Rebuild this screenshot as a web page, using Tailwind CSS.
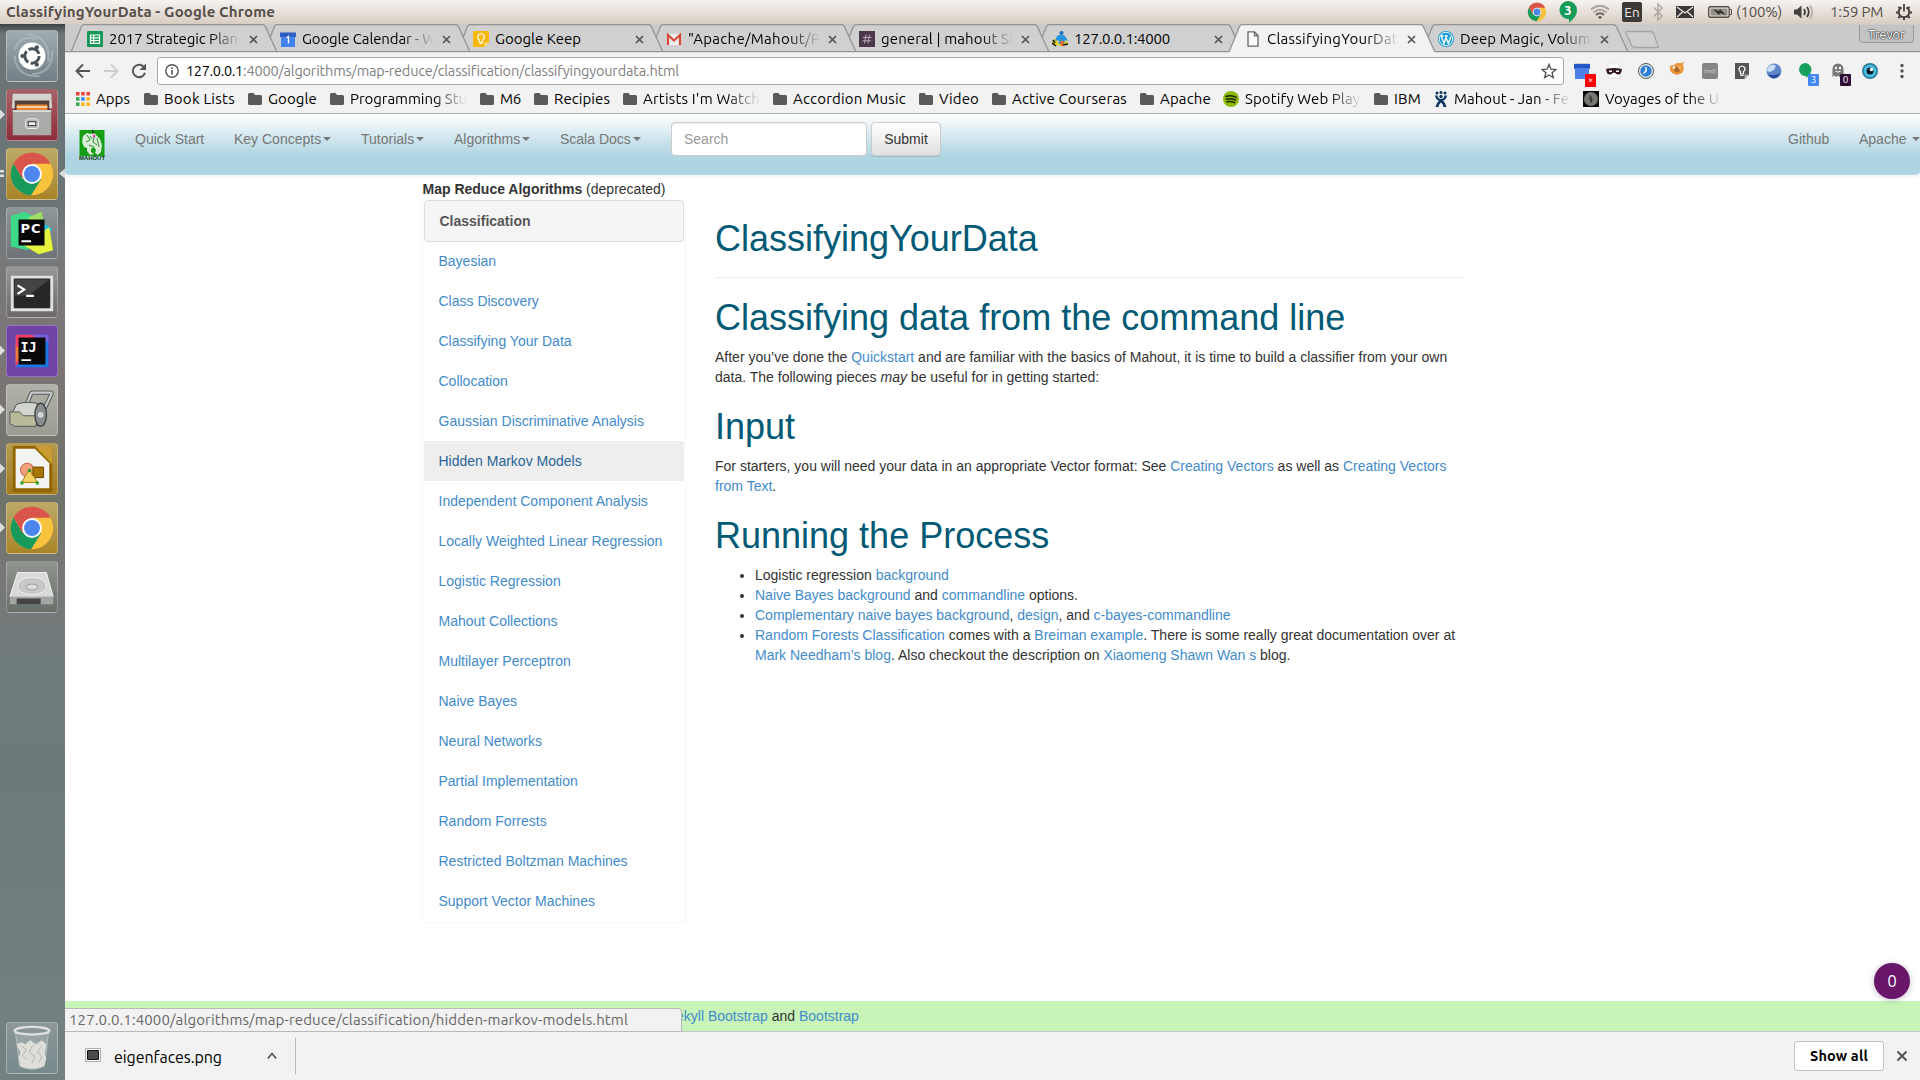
<!DOCTYPE html>
<html lang="en">
<head>
<meta charset="utf-8">
<title>ClassifyingYourData - Google Chrome</title>
<script src="https://cdn.jsdelivr.net/npm/@tailwindcss/browser@4"></script>
</head>
<body class="w-[1920px] h-[1080px] overflow-hidden flex flex-col bg-white font-[Ubuntu,'Open_Sans','Noto_Sans',sans-serif]">
<svg class="hidden">
  <defs>
    <symbol id="chrome" viewBox="0 0 48 48">
      <circle cx="24" cy="24" r="22" fill="#f9c23c"/>
      <path d="M24 24 4.9 13A22 22 0 0 1 43 13H24z" fill="#db5246"/>
      <path d="M4.9 13A22 22 0 0 0 23 46L33.5 29.5 24 24 14.5 29.5z" fill="#189a5c"/>
      <path d="M24 13h19A22 22 0 0 0 4.9 13l9.6 16.5z" fill="#d9554c"/>
      <circle cx="24" cy="24" r="10.3" fill="#fff"/><circle cx="24" cy="24" r="8.3" fill="#4c86ee"/>
    </symbol>
    <symbol id="folder" viewBox="0 0 14 12"><path d="M0 1.5Q0 0 1.5 0H5.5L7 2H12.5Q14 2 14 3.500V10.500Q14 12 12.500 12H1.500Q0 12 0 10.500z" fill="#5a5a5a"/></symbol>
    <symbol id="apps" viewBox="0 0 14 14"><path d="M0 0h3.500v3.500H0zM5.200 0h3.500v3.500H5.200zM10.400 0h3.500v3.500h-3.500z" fill="#ea4335"/><path d="M0 5.200h3.500v3.500H0z" fill="#34a853"/><path d="M5.200 5.200h3.500v3.500H5.200z" fill="#2a8bf2"/><path d="M10.400 5.200h3.500v3.500h-3.500zM5.200 10.400h3.500v3.500H5.200zM10.400 10.400h3.500v3.500h-3.500z" fill="#fbb50b"/><path d="M0 10.400h3.500v3.500H0z" fill="#34a853"/></symbol>
    <symbol id="spotify" viewBox="0 0 16 16"><circle cx="8" cy="8" r="8" fill="#8cba05"/><path d="M3 5.400Q8.500 3.800 13.300 6.400M3.500 8.200Q8.200 6.900 12.400 9M4 10.800Q8 9.800 11.500 11.600" stroke="#1b2400" stroke-width="1.600" fill="none" stroke-linecap="round"/></symbol>
    <symbol id="jira" viewBox="0 0 14 16"><g fill="#0b3562"><circle cx="3" cy="2" r="1.500"/><circle cx="7" cy="1.500" r="1.500"/><circle cx="11" cy="2" r="1.500"/><path d="M1 4.500h2.500Q4 8 7 8t3.500-3.500H13Q12.500 8.500 9 9.700 12 12 12.500 16H9.500Q9.500 13 7 11.500 4.500 13 4.500 16H1.500Q2 12 5 9.700 1.500 8.500 1 4.500z"/><circle cx="7" cy="5.500" r="1.700"/></g></symbol>
    <symbol id="voyages" viewBox="0 0 16 16"><path d="M0 0h16v16H0z" fill="#080808"/><circle cx="8" cy="8" r="7" fill="#757773"/><path d="M7 4.500Q10.500 8 7.500 12M6 6l2 4" stroke="#222" fill="none"/></symbol>
    <symbol id="sheets" viewBox="0 0 16 16"><rect width="16" height="16" rx="1" fill="#149a58"/><path d="M3.500 4h9v8.300h-9zM3.500 6.800h9M3.500 9.500h9M6.700 4v8" fill="none" stroke="#fff" stroke-width="1.200"/></symbol>
    <symbol id="calendar" viewBox="0 0 16 16"><path d="M1 0h14v3H1z" fill="#c3c7cf"/><path d="M0 1.500h16V6H0z" fill="#2f5ec4"/><path d="M1 6h14v10H1z" fill="#4383f1"/><path d="M6.500 6.800 8.500 5.500V12.500" stroke="#fff" stroke-width="1.300" fill="none"/></symbol>
    <symbol id="keep" viewBox="0 0 16 16"><path d="M1 0h14q1 0 1 1v10.500L11.500 16H1q-1 0-1-1V1q0-1 1-1z" fill="#f8b80b"/><path d="M16 11.500 11.500 16v-4.500z" fill="#fde08b"/><path d="M8 2.800a3.300 3.300 0 0 0-1.700 6.100V11h3.400V8.900A3.300 3.300 0 0 0 8 2.800zM6.500 12.500h3" fill="none" stroke="#fff" stroke-width="1.100"/></symbol>
    <symbol id="gmail" viewBox="0 0 16 16"><path d="M1 3h14v11H1z" fill="#eee"/><path d="M2 14V4l6 5.500L14 4v10" fill="none" stroke="#d6493b" stroke-width="2.200"/></symbol>
    <symbol id="slack" viewBox="0 0 16 16"><path d="M0 0h16v16H0z" fill="#4c374b"/><path d="M7 3.500 5.500 12.500M10.500 3.500 9 12.500M4 6.500h8.500M3.500 9.800H12" stroke="#b9a9b9" fill="none"/></symbol>
    <symbol id="mahoutfav" viewBox="0 0 16 16"><path d="M0 11Q2 7 5 8l1 5 9-3 1 4-6 1-4-1-4 1z" fill="#e7cf05"/><path d="M0 12l4 3M11 14l5-1M1 9l2 3" stroke="#111" stroke-width="1.500"/><circle cx="9.500" cy="2" r="2" fill="#1470bc"/><path d="M5 5Q9 2 13 5l3 5-3-1-1 4H7L6.500 9 3 10z" fill="#2594dc"/><path d="M8 10h4l-1 5H9z" fill="#f26d21"/></symbol>
    <symbol id="page" viewBox="0 0 16 16"><path d="M3 .8h6.500L13 4.500V15.200H3zM9.500 .8v4H13" fill="#fafafa" stroke="#666" stroke-width="1.300"/></symbol>
    <symbol id="wordpress" viewBox="0 0 16 16"><circle cx="8" cy="8" r="8" fill="#1b9ed0"/><circle cx="8" cy="8" r="6.700" fill="none" stroke="#fff" stroke-width=".9"/><path d="M3.200 5l2.800 7.500 2-6 2.300 6L13 5.500M2.500 5h3M6.800 5h3" stroke="#fff" stroke-width="1.300" fill="none"/></symbol>
  </defs>
</svg>

<!-- Desktop panel -->
<header class="h-6 shrink-0 flex items-center pl-1.5 pr-2 bg-linear-to-b from-[#f6f3f0] to-[#d8cdc3] text-[#574f4a] text-[15px]">
  <span data-w="269" class="font-bold text-[15px] whitespace-nowrap mr-auto">ClassifyingYourData - Google Chrome</span>
  <div class="flex items-center w-[385px] h-6">
    <svg class="w-5 h-5 mr-3" viewBox="0 0 48 48"><use href="#chrome"/></svg>
    <div class="relative w-[18px] h-6 mr-[13px]"><svg class="w-[18px] h-6" viewBox="0 0 18 24"><path d="M9 1a9 9 0 0 1 9 9c0 6-4 9-8 13v-4A9 9 0 1 1 9 1z" fill="#169c5b"/></svg><b class="absolute left-0 top-0 w-[18px] text-center text-white text-[13px] leading-5">3</b></div>
    <svg class="w-5 h-5 mr-3" viewBox="0 0 20 20" fill="none" stroke-width="1.800"><path d="M1 7.500Q10 0 19 7.500M3.500 10.500Q10 5 16.500 10.500" stroke="#aaa39c"/><path d="M6 13Q10 9.500 14 13" stroke="#655e58"/><path d="M8 15l2 2 2-2q-2-1.500-4 0z" fill="#3c3836" stroke="none"/></svg>
    <span class="w-5 h-5 rounded-xs bg-[#3c3a39] text-[#efebe7] text-[13.5px] leading-5 text-center mr-[10px]">En</span>
    <svg class="w-3 h-5 mr-3" viewBox="0 0 12 20" fill="none" stroke="#b0a8a0" stroke-width="1.500"><path d="M2 5.500 10 14 6 18V2l4 4-8 8.500"/></svg>
    <svg class="w-[18px] h-3 mr-[14px]" viewBox="0 0 18 12"><path d="M0 0h18v12H0z" fill="#3c3a39"/><path d="M1 1l8 6 8-6M1 11l5.500-5M17 11l-5.500-5" stroke="#e8e2dc" stroke-width="1.300" fill="none"/></svg>
    <svg class="w-6 h-3 mr-1" viewBox="0 0 24 12"><rect x=".7" y=".7" width="20.500" height="10.600" rx="1.500" fill="none" stroke="#55504c" stroke-width="1.400"/><path d="M2.500 2.500h17v7h-17z" fill="#96908b"/><path d="M22 3.500h1.500v5H22" fill="none" stroke="#55504c"/><path d="M5 3l6 2 1-2 6 6-6-2-1 2z" fill="#35312f"/></svg>
    <span class="w-[58px] flex"><span data-w="46" class="whitespace-nowrap text-[15px]">(100%)</span></span>
    <svg class="w-5 h-4 mr-4" viewBox="0 0 20 16"><path d="M0 5.500h3L7.500 1.500v13L3 10.500H0z" fill="#45403d"/><path d="M10 5q2 3 0 6M13 3q3.500 5 0 10" fill="none" stroke="#45403d" stroke-width="1.800"/><path d="M16 1.500q4.500 6.500 0 13" fill="none" stroke="#b5ada6" stroke-width="1.600"/></svg>
    <span data-w="53" class="whitespace-nowrap text-[15px]">1:59 PM</span>
    <svg class="w-4 h-4 ml-auto" viewBox="0 0 16 16" fill="none" stroke="#45403d"><path d="M5.500 3.300a5.300 5.300 0 1 0 5 0" stroke-width="2"/><path d="M8 0v7.500" stroke-width="1.800"/><path d="M0 8.500h2.500M13.500 8.500H16M2.300 14l2-2M13.700 14l-2-2M8 13.500V16M2.500 3l1.500 1.500M13.500 3 12 4.500" stroke-width="2"/></svg>
  </div>
</header>

<div class="flex flex-1 min-h-0">
<!-- Launcher -->
<aside class="relative w-[65px] shrink-0 overflow-hidden flex flex-col items-start pl-1.5 pt-1.5 pb-1.5 gap-[7px] bg-[linear-gradient(180deg,#3c4344_0,#6c7677_10px,#6b7577_180px,#77797a_220px,#7c7475_350px,#6d7468_470px,#787778_560px,#6f7a7a_630px,#6d7a7c_750px,#748081_1056px)]">
  <svg class="size-[52px] rounded-[4px] border border-white/30 bg-linear-to-b from-[#a0acb0] to-[#728087] shrink-0" viewBox="0 0 52 52"><path d="M8 20Q12 4 30 8M20 3Q46 6 43 32M47 20Q48 44 26 45M8 26Q9 48 34 47" stroke="#b7c1c4" stroke-width="2" fill="none" opacity=".6"/><circle cx="26" cy="26" r="14" fill="#fff"/><circle cx="26" cy="26" r="7.500" fill="none" stroke="#47525b" stroke-width="3" stroke-dasharray="13.200 2.500"/><g fill="#47525b"><circle cx="16" cy="26" r="2.200"/><circle cx="31" cy="17" r="2.200"/><circle cx="31" cy="35" r="2.200"/></g></svg>
  <svg class="size-[52px] rounded-[4px] border border-white/25 bg-linear-to-b from-[#a66269] to-[#8d2c3b] shrink-0" viewBox="0 0 52 52"><path d="M6 4h40l1 15H5z" fill="#d3d3d1"/><path d="M8 11h36v12H8z" fill="#554236"/><path d="M10 15h32v7H10z" fill="#e78535"/><path d="M10 17h32v1.500H10z" fill="#ffe9c6"/><path d="M6 21h40v26H6z" fill="#aaaaa8"/><path d="M6 21h40v2H6z" fill="#ddd"/><rect x="19.500" y="30" width="13" height="10" rx="2" fill="#b5b5b5" stroke="#eee"/><rect x="22" y="33" width="8" height="4" fill="#eee" stroke="#333"/></svg>
  <svg class="size-[52px] rounded-[4px] border border-white/25 bg-linear-to-b from-[#bda968] to-[#a88425] shrink-0" viewBox="0 0 52 52"><use href="#chrome" x="2" y="2" width="48" height="48"/></svg>
  <svg class="size-[52px] rounded-[4px] border border-white/25 bg-linear-to-b from-[#909799] to-[#6c7275] shrink-0" viewBox="0 0 52 52"><path d="M4 8 18 4l12 6-8 34-18-4z" fill="#3ed889"/><path d="M22 10 36 4l3 14-8 8z" fill="#9fdf63"/><path d="M36 14l11 8-8 10z" fill="#1fc2e8"/><path d="M16 38 44 20l4 24-15 4z" fill="#e4f33e"/><path d="M12 12h27v27H12z" fill="#080808"/><path d="M15 33.500h10v2H15z" fill="#fff"/><text x="14" y="25.500" font-family="DejaVu Sans" font-weight="bold" font-size="13.500" fill="#fff" textLength="21">PC</text></svg>
  <svg class="size-[52px] rounded-[4px] border border-white/25 bg-linear-to-b from-[#989796] to-[#6e6a6a] shrink-0" viewBox="0 0 52 52"><path d="M4 9h44v37H4z" fill="#dfe0df"/><path d="M7 12h38v31H7z" fill="#262727"/><path d="M8 13h36L22 30H8z" fill="#434444"/><path d="M11 19l7 4.500-7 4.500M20 30h8" stroke="#fff" stroke-width="2.200" fill="none"/></svg>
  <svg class="size-[52px] rounded-[4px] border border-white/25 bg-[#7044a5] shrink-0" viewBox="0 0 52 52"><path d="M9 9h34v34H9z" fill="#1978e8"/><path d="M9 9h22L9 43z" fill="#fb3d6a"/><path d="M9 20l8 8-8 10z" fill="#ea7b35"/><path d="M26 9h17v8L30 13z" fill="#7b5edc"/><path d="M12 12h28v28H12z" fill="#090909"/><path d="M15 34.500h10v2H15z" fill="#fff"/><text x="14" y="27" font-family="DejaVu Sans Mono" font-weight="bold" font-size="14" fill="#fff">IJ</text></svg>
  <svg class="size-[52px] rounded-[4px] border border-white/25 bg-linear-to-b from-[#b0b1a9] to-[#9b9d93] shrink-0" viewBox="0 0 52 52"><path d="M19 24 25 9Q25.500 8 27 8H45Q47 8 46 10L36 31" fill="none" stroke="#5b605e" stroke-width="4.500"/><path d="M19 24 25 9Q25.500 8 27 8H45Q47 8 46 10L36 31" fill="none" stroke="#c6cac8" stroke-width="2.300"/><path d="M10 20Q22 16 34 20L38 42H14L5 30z" fill="#d2d4ce" stroke="#4d514f"/><path d="M3 28h10l4 4h15l-2 11H8L3 40z" fill="#b9ba9a" stroke="#555"/><ellipse cx="35" cy="31" rx="6" ry="12" fill="#8a8f8f" stroke="#444" stroke-width="1.500"/><circle cx="35" cy="31" r="3" fill="#d6d8d8"/></svg>
  <svg class="size-[52px] rounded-[4px] border border-white/25 bg-linear-to-b from-[#b39b52] to-[#a37a18] shrink-0" viewBox="0 0 52 52"><path d="M6 2h41v46q0 2-2 2H8q-2 0-2-2z" fill="#916400"/><path d="M29 2h18v19z" fill="#c99c31"/><path d="M9 5h20l15 15v26H9z" fill="#f3f3f2"/><circle cx="21" cy="27" r="7" fill="#f2a17b" stroke="#b85c3c"/><path d="M27 24h11v11H27z" fill="#a87500" stroke="#694900"/><path d="M23 27l9 13H15z" fill="#f4d163" stroke="#a87b10"/><path d="M14 39h3v3h-3zM30 39h3v3h-3zM22 26h3v3h-3z" fill="#22a51d"/></svg>
  <svg class="size-[52px] rounded-[4px] border border-white/25 bg-linear-to-b from-[#bda968] to-[#a88425] shrink-0" viewBox="0 0 52 52"><use href="#chrome" x="2" y="2" width="48" height="48"/></svg>
  <svg class="size-[52px] rounded-[4px] border border-white/25 bg-linear-to-b from-[#91948f] to-[#686f69] shrink-0" viewBox="0 0 52 52"><path d="M11 11h30l7 25H3z" fill="#d8d9d8" stroke="#f1f1f1"/><path d="M3 36h45v8H3z" fill="#a4a6a5"/><path d="M10 38h25v6H10z" fill="#444"/><ellipse cx="26" cy="25" rx="15" ry="9" fill="#c7c9c8" stroke="#eee"/><ellipse cx="26" cy="26" rx="6" ry="3" fill="#ddd" stroke="#999"/></svg>
  <svg class="size-[52px] rounded-[4px] border border-white/30 bg-linear-to-b from-[#8c9799] to-[#78898b] shrink-0 mt-auto" viewBox="0 0 52 52"><path d="M9 10 13 45Q26 51 39 45L43 10z" fill="#98a4a5" stroke="#b8c1c1"/><path d="M10 22l5-2 4 2 5-4 6 4 6-4 5 4-2 10 2 5-3 8q-12 5-24 0l-2-9 2-5z" fill="#deded9"/><path d="M15 24l5 4-4 6 5 4M27 23l-4 7 6 5-3 7M36 24l-4 6 4 5-3 6" stroke="#b4b5b1" fill="none"/><ellipse cx="26" cy="8" rx="18" ry="4" fill="#889596" stroke="#dde0df" stroke-width="2.500"/></svg>
  <!-- running-window pips over the launcher's edges -->
  <svg class="absolute left-0 top-0 w-[65px] h-[620px]" viewBox="0 0 65 620"><g fill="#dcdedd"><path d="M0 85.500l5 5-5 5zM0 321.500l5 5-5 5zM0 380.500l5 5-5 5zM0 439.500l5 5-5 5zM0 498.500l5 5-5 5zM65 144.500l-6 5 6 5zM0 146h4v2.500H0zM0 150.500h4v2.500H0z"/></g></svg>
</aside>

<!-- Browser window -->
<main class="relative flex-1 min-w-0 flex flex-col">
  <div class="relative h-7 shrink-0 bg-[#cbcbcb]">
    <svg id="tabshapes" class="absolute left-0 top-0 w-[1855px] h-[30px]" viewBox="65 24 1855 30" fill="#d0d0d0" stroke="#949494" stroke-width="1.300"></svg>
    <div id="tabs" class="relative flex h-7 pl-[22px]"></div>
    <div class="absolute right-1.5 top-px w-[55px] h-[18px] border border-t-0 border-[#999] rounded-b-[4px] bg-[#c4c4c4] text-white text-[12.5px] leading-[19px] text-center [text-shadow:0_0_1px_#222,0_0_1px_#222,0_0_2px_#222]">Trevor</div>
  </div>

  <div class="h-[38px] shrink-0 bg-[#f2f2f2] flex items-center pl-2.5">
    <svg class="w-4 h-4" viewBox="0 0 16 16" fill="none" stroke="#555" stroke-width="2"><path d="M15 8H2M8 1.500 1.500 8 8 14.500"/></svg>
    <svg class="w-4 h-4 ml-3" viewBox="0 0 16 16" fill="none" stroke="#ccc" stroke-width="1.800"><path d="M1 8h13M8 1.500 14.500 8 8 14.500"/></svg>
    <svg class="w-4 h-4 ml-3" viewBox="0 0 16 16"><path d="M13 4.200A6.200 6.200 0 1 0 14 9.800" fill="none" stroke="#555" stroke-width="2"/><path d="M15 .5V7H8.500z" fill="#555"/></svg>
    <div class="ml-2.5 w-[1407px] h-7 bg-white border border-[#a9a9a9] rounded-[3px] flex items-center pl-[7px] pr-1.5 shrink-0">
      <svg class="w-3.5 h-3.5 mr-[7px]" viewBox="0 0 14 14"><circle cx="7" cy="7" r="6.200" fill="none" stroke="#555" stroke-width="1.400"/><path d="M6.200 6h1.600v4.500H6.200zM6.200 3.300h1.600v1.600H6.200z" fill="#555"/></svg>
      <span data-w="57" class="text-[14.5px] text-black whitespace-nowrap">127.0.0.1</span><span data-w="436" class="text-[14.5px] text-[#808080] whitespace-nowrap">:4000/algorithms/map-reduce/classification/classifyingyourdata.html</span>
      <svg class="w-4 h-4 ml-auto" viewBox="0 0 16 16"><path d="M8 1.500l1.900 4.600 5 .4-3.800 3.200 1.200 4.900L8 12l-4.300 2.600 1.200-4.900L1.100 6.500l5-.4z" fill="none" stroke="#555" stroke-width="1.400"/></svg>
    </div>
    <div class="flex ml-2.5 gap-4 items-center">
      <div class="relative size-4 mr-px"><svg class="size-4" viewBox="0 0 16 16"><path d="M1 0h14v2H1z" fill="#cfcfcf"/><path d="M0 1h16v5H0z" fill="#2456c6"/><path d="M1 5h14v11H1z" fill="#4c80e8"/></svg><span class="absolute left-[11px] top-[11px] w-[11px] h-[13px] rounded-[1px] bg-[#f00] text-white text-[10px] leading-[12px] text-center">×</span></div>
      <svg class="size-4 -ml-px" viewBox="0 0 16 16"><path d="M2 0h9l3 3v12H2z" fill="#fff" stroke="#ddd"/><path d="M0 6q8-2 16 0-.5 6-4.500 5.500L8 9.500 4.500 11.500Q.5 12 0 6z" fill="#351a1f"/><path d="M3 7.500h3V9H3zM10 7.500h3V9h-3z" fill="#fff"/></svg>
      <svg class="size-4" viewBox="0 0 16 16"><circle cx="8" cy="8" r="7.500" fill="#e8edf2" stroke="#555"/><circle cx="8" cy="8" r="5.700" fill="#2f80d6"/><path d="M8 4v4L5.500 10.500" stroke="#fff" stroke-width="1.500" fill="none"/></svg>
      <svg class="size-4 -mt-1 -ml-px mr-px" viewBox="0 0 16 16"><path d="M1 5l4-1 3-2 5 0 2-2-1 4 1 4-2 4-5 2-5-2-2-3z" fill="#e9963b"/><circle cx="8" cy="8.500" r="3" fill="#b36a28"/><circle cx="5" cy="6.500" r="1.300" fill="#fff"/><path d="M8 5l4 1-1 3z" fill="#f6c27c"/></svg>
      <div class="size-4 rounded-[2px] bg-[#858585] text-[#d5d5d5] text-[6px] leading-4 text-center">(md)</div>
      <svg class="size-4" viewBox="0 0 16 16"><path d="M1 0h14v11.500L10.500 16H1z" fill="#555"/><path d="M15 11.500 10.500 16v-4.500z" fill="#aaa"/><path d="M8 3a3 3 0 0 0-1.500 5.600V11h3V8.600A3 3 0 0 0 8 3zM6.500 12.500h3" fill="none" stroke="#fff" stroke-width="1.200"/></svg>
      <svg class="size-4" viewBox="0 0 16 16"><circle cx="8" cy="8" r="7.500" fill="#5d86c8"/><path d="M3 3q4-3 7 0l-2 4-4 2-3-1q0-3 2-5z" fill="#c9dff5"/><path d="M2 11q6 3 12-1-1 4.500-6 5.500-4-.5-6-4.500z" fill="#254c9c"/></svg>
      <div class="relative size-4"><svg class="size-4" viewBox="0 0 16 16"><path d="M7 0a6.500 6.500 0 0 1 6.500 6.500Q13 12 8 15v-2A6.500 6.500 0 1 1 7 0z" fill="#18a05e"/></svg><span class="absolute left-[10px] top-[11px] w-[11px] h-[12px] rounded-[1px] bg-[#4285f4] text-white text-[10px] leading-[12px] text-center">3</span></div>
      <div class="relative size-4"><svg class="size-4" viewBox="0 0 16 16"><path d="M2.500 14V6a5.500 5.500 0 0 1 11 0v8l-2-1.500L9.500 14 8 12.500 6.500 14l-2-1.500z" fill="#777"/><circle cx="6" cy="5" r="1.200" fill="#fff"/><circle cx="10" cy="5" r="1.200" fill="#fff"/><path d="M5.500 8q2.500 2.500 5 0" stroke="#fff" fill="none"/></svg><span class="absolute left-[10px] top-[11px] w-[11px] h-[12px] rounded-[1px] bg-[#300a35] text-white text-[10px] leading-[12px] text-center">0</span></div>
      <svg class="size-4" viewBox="0 0 16 16"><circle cx="8" cy="8" r="8" fill="#2f7995"/><circle cx="8" cy="8" r="6.300" fill="#45bfe3"/><circle cx="8" cy="8" r="3.500" fill="#0d1a22"/><circle cx="9.500" cy="6.500" r="1.800" fill="#e5f5fa"/></svg>
      <svg class="w-4 h-4" viewBox="0 0 16 16" fill="#555"><circle cx="8" cy="2.500" r="1.700"/><circle cx="8" cy="8" r="1.700"/><circle cx="8" cy="13.500" r="1.700"/></svg>
    </div>
  </div>

  <div id="bookmarks" class="h-6 shrink-0 bg-[#f2f2f2] border-b border-[#b5b5b5] flex items-center pl-[11px] pb-[5px]"></div>

  <!-- Web page -->
  <div class="flex-1 min-h-0 flex flex-col bg-white text-[#333] font-['Liberation_Sans',Arial,sans-serif] text-sm leading-5">
    <nav class="h-[61px] shrink-0 flex items-start bg-[linear-gradient(to_bottom,#fff_0,#afd4e2_42px,#afd4e2_100%)] border-b border-[#b8e2e4] rounded-b-[4px] shadow-[0_1px_5px_rgba(0,0,0,.075)] text-[#777] pl-3.5">
      <svg class="w-[26px] h-[31px] mt-[15px]" viewBox="0 0 26 31"><path d="M.5 1h25v26H.5z" fill="#159e13"/><path d="M4 7l4-3 4 1 2-3 3 4 4 4 2 6-1 7-3 3-3-2 1-3-2-3-3 2v3l3 2-4 1-3-4 0-3-3-1-2-5z" fill="#d9ecd8"/><path d="M8 6l3 5-4 2M15 8l-1 5 4 3M18 9l2 9M10 16l5 2M11 7l2 3" stroke="#279426" fill="none"/><path d="M13 0l3 4-3 1z" fill="#195018"/><circle cx="15" cy="7" r="1.300" fill="#f02bc3"/><text x="0" y="31" font-size="5.500" font-weight="bold" fill="#0a3a0a" textLength="26" lengthAdjust="spacingAndGlyphs" font-family="Liberation Sans">MAHOUT</text></svg>
      <div class="flex pt-[15px] pl-[30px]">
        <span class="w-[99px]">Quick Start</span>
        <span class="w-[127px] flex items-center">Key Concepts<i class="ml-0.5 border-x-4 border-t-4 border-x-transparent border-t-[#777]"></i></span>
        <span class="w-[93px] flex items-center">Tutorials<i class="ml-0.5 border-x-4 border-t-4 border-x-transparent border-t-[#777]"></i></span>
        <span class="w-[106px] flex items-center">Algorithms<i class="ml-0.5 border-x-4 border-t-4 border-x-transparent border-t-[#777]"></i></span>
        <span class="w-[111px] flex items-center">Scala Docs<i class="ml-0.5 border-x-4 border-t-4 border-x-transparent border-t-[#777]"></i></span>
      </div>
      <div class="mt-2 flex gap-1">
        <div class="w-[196px] h-[34px] rounded-[4px] border border-[#ccc] bg-white shadow-[inset_0_1px_1px_rgba(0,0,0,.075)] px-3 py-1.5 text-[#999]">Search</div>
        <div class="w-[70px] h-[34px] rounded-[4px] border border-[#ccc] bg-linear-to-b from-white to-[#e0e0e0] shadow-[0_1px_1px_rgba(0,0,0,.1)] py-1.5 text-center text-[#333]">Submit</div>
      </div>
      <div class="ml-auto flex pt-[15px]"><span class="w-[71px]">Github</span><span class="flex items-center w-[61px]">Apache<i class="ml-1.5 border-x-4 border-t-4 border-x-transparent border-t-[#777]"></i></span></div>
    </nav>

    <div class="flex flex-1 min-h-0 pl-[357px]">
      <section class="w-[264px] pt-1 shrink-0">
        <div class="whitespace-nowrap pl-[0.5px]"><b>Map Reduce Algorithms</b> (deprecated)</div>
        <div id="sidelist" class="border border-t-0 border-[#f7f7f7] px-px pb-px mt-px">
          <div class="h-[42px] -mb-px rounded-[4px] border border-[#ddd] bg-[#f5f5f5] pl-[14.5px] leading-10 font-bold text-[#555]">Classification</div>
        </div>
      </section>
      <article class="w-[750px] ml-[29px] pt-[44px]">
        <h1 class="text-4xl leading-[39.6px] text-[#005a75] pb-[18.4px] border-b border-[#eee]">ClassifyingYourData</h1>
        <h1 class="text-4xl leading-[39.6px] text-[#005a75] mt-5 mb-[9px]">Classifying data from the command line</h1>
        <p>After you’ve done the <a class="text-[#428bca]">Quickstart</a> and are familiar with the basics of Mahout, it is time to build a classifier from your own data. The following pieces <em>may</em> be useful for in getting started:</p>
        <h1 class="text-4xl leading-[39.6px] text-[#005a75] mt-5 mb-2.5">Input</h1>
        <p>For starters, you will need your data in an appropriate Vector format: See <a class="text-[#428bca]">Creating Vectors</a> as well as <a class="text-[#428bca]">Creating Vectors from Text</a>.</p>
        <h1 class="text-4xl leading-[39.6px] text-[#005a75] mt-5 mb-[9px]">Running the Process</h1>
        <ul class="list-disc pl-10">
          <li>Logistic regression <a class="text-[#428bca]">background</a></li>
          <li><a class="text-[#428bca]">Naive Bayes background</a> and <a class="text-[#428bca]">commandline</a> options.</li>
          <li><a class="text-[#428bca]">Complementary naive bayes background</a>, <a class="text-[#428bca]">design</a>, and <a class="text-[#428bca]">c-bayes-commandline</a></li>
          <li><a class="text-[#428bca]">Random Forests Classification</a> comes with a <a class="text-[#428bca]">Breiman example</a>. There is some really great documentation over at <a class="text-[#428bca]">Mark Needham’s blog</a>. Also checkout the description on <a class="text-[#428bca]">Xiaomeng Shawn Wan s</a> blog.</li>
        </ul>
      </article>
    </div>

    <footer class="relative h-[30px] shrink-0 bg-[#c8f4b9] pt-[5px] pl-[604px]">
      <a class="text-[#428bca]">Jekyll Bootstrap</a> and <a class="text-[#428bca]">Bootstrap</a>
      <div class="absolute left-0 top-[7px] w-[617px] h-[24px] bg-[#f2f2f2] border border-l-0 border-[#b9b9b9] rounded-tr-[4px] pl-1 flex items-center font-[Ubuntu,'Open_Sans',sans-serif] text-[15px] text-[#666]"><span data-w="559" class="whitespace-nowrap">127.0.0.1:4000/algorithms/map-reduce/classification/hidden-markov-models.html</span></div>
    </footer>
  </div>

  <!-- Downloads shelf -->
  <div class="h-[49px] shrink-0 bg-[#f2f2f2] border-t border-[#c4c4c4] flex items-center pr-3 text-black">
    <svg class="w-4 h-3.5 ml-5 -mt-0.5" viewBox="0 0 16 14"><path d="M.5 .5h15v13H.5z" fill="#fff" stroke="#aaa"/><path d="M2.500 2.500h11v9h-11z" fill="#4a4a4a" stroke="#111"/></svg>
    <span class="ml-[13px] mt-0.5 w-[153px] flex"><span data-w="108" class="text-[16px] whitespace-nowrap">eigenfaces.png</span></span>
    <svg class="w-2.5 h-2" viewBox="0 0 10 8"><path d="M.8 6.500 5 1.500 9.200 6.500" fill="none" stroke="#555" stroke-width="1.700"/></svg>
    <i class="ml-[18px] w-px h-9 bg-[#bbb]"></i>
    <div class="ml-auto -mt-px w-[90px] h-[30px] bg-white border border-[#c2c2c2] rounded-[3px] text-center"><span data-w="58" class="inline-block text-[14.5px] font-semibold leading-[27px] whitespace-nowrap">Show all</span></div>
    <svg class="ml-3 w-3 h-3" viewBox="0 0 12 12"><path d="M1.500 1.500l9 9M10.500 1.500l-9 9" stroke="#555" stroke-width="2"/></svg>
  </div>
  <div class="absolute right-[10px] bottom-[81px] size-9 rounded-full bg-[#68156a] shadow-[0_1px_6px_rgba(0,0,0,.25)] text-white text-[16px] leading-9 text-center font-['Open_Sans',sans-serif]">0</div>
</main>
</div>

<script>
const tabs = [
  ['sheets', '2017 Strategic Plan', 129, true], ['calendar', 'Google Calendar - W', 134, true],
  ['keep', 'Google Keep', 86, false], ['gmail', '"Apache/Mahout/P', 132, true],
  ['slack', 'general | mahout Sl', 132, true], ['mahoutfav', '127.0.0.1:4000', 96, false],
  ['page', 'ClassifyingYourDat', 131, true], ['wordpress', 'Deep Magic, Volum', 131, true]
];
const shape = k => { const x = 193 * k; return `M${71 + x} 52L${81.5 + x} 26.500Q${82.300 + x} 24.600 ${84.500 + x} 24.600H${262.500 + x}Q${264.500 + x} 24.600 ${265.300 + x} 26.500L${277 + x} 52`; };
let s = '';
for (const k of [7, 5, 4, 3, 2, 1, 0]) s += `<path d="${shape(k)}"/>`;
s += '<path d="M65 51.600H1920"/>';
s += `<path d="${shape(6)}V54H1229V52" fill="#f2f2f2" stroke="none"/><path d="${shape(6)}" fill="none"/>`;
s += '<path d="M1627 31.500H1651Q1653 31.500 1653.700 33.500L1658.500 47.500H1635Q1632.500 47.500 1631.700 45.500L1626 33Q1625.500 31.500 1627 31.500z" stroke="#a5a5a5"/>';
document.getElementById('tabshapes').innerHTML = s;
document.getElementById('tabs').innerHTML = tabs.map(([icon, text, w, fade]) =>
  `<div class="w-[193px] shrink-0 flex items-center"><svg class="size-4 shrink-0 mr-1.5 mt-px"><use href="#${icon}"/></svg><div class="w-[134px] overflow-hidden ${fade ? '[mask-image:linear-gradient(to_right,#000_100px,transparent_132px)]' : ''}"><span data-w="${w}" class="text-[15px] text-black whitespace-nowrap">${text}</span></div><svg class="w-[9px] h-[9px] ml-1.5 mt-0.5" viewBox="0 0 9 9"><path d="M1 1l7 7M8 1l-7 7" stroke="#555" stroke-width="1.700"/></svg></div>`).join('');

// icon, label, left edge, next item's left edge, label width, fades out
const marks = [
  ['apps', 'Apps', 76, 144, 34], ['folder', 'Book Lists', 144, 248, 71], ['folder', 'Google', 248, 330, 49],
  ['folder', 'Programming Stu', 330, 480, 117, 1], ['folder', 'M6', 480, 534, 21], ['folder', 'Recipies', 534, 623, 56],
  ['folder', "Artists I'm Watch", 623, 773, 117, 1], ['folder', 'Accordion Music', 773, 919, 113], ['folder', 'Video', 919, 992, 40],
  ['folder', 'Active Courseras', 992, 1140, 115], ['folder', 'Apache', 1140, 1223, 51], ['spotify', 'Spotify Web Play', 1223, 1374, 115, 1],
  ['folder', 'IBM', 1374, 1434, 27], ['jira', 'Mahout - Jan - Fe', 1434, 1583, 115, 1], ['voyages', 'Voyages of the U', 1583, 1733, 114, 1]
];
document.getElementById('bookmarks').innerHTML = marks.map(([icon, text, x, next, w, fade]) =>
  `<div class="shrink-0 flex items-center" style="width:${next - x}px"><svg class="${icon === 'folder' ? 'w-3.5 h-3' : icon === 'apps' || icon === 'jira' ? 'w-3.5 h-4' : 'size-4'} shrink-0 mr-1.5"><use href="#${icon}"/></svg><div class="-mt-px overflow-hidden ${fade ? 'w-[117px] [mask-image:linear-gradient(to_right,#000_84px,transparent_117px)]' : ''}"><span data-w="${w}" class="text-[15px] text-black whitespace-nowrap">${text}</span></div></div>`).join('');

document.getElementById('sidelist').insertAdjacentHTML('beforeend',
  ['Bayesian', 'Class Discovery', 'Classifying Your Data', 'Collocation', 'Gaussian Discriminative Analysis', 'Hidden Markov Models', 'Independent Component Analysis', 'Locally Weighted Linear Regression', 'Logistic Regression', 'Mahout Collections', 'Multilayer Perceptron', 'Naive Bayes', 'Neural Networks', 'Partial Implementation', 'Random Forrests', 'Restricted Boltzman Machines', 'Support Vector Machines']
    .map(t => `<div class="h-10 leading-10 pl-[14.5px] whitespace-nowrap ${t[0] === 'H' ? 'bg-[#eee] text-[#2a6496]' : 'text-[#428bca]'}">${t}</div>`).join(''));

// Track interface labels to their set widths once styles are in place
function fitLabels() {
  for (const el of document.querySelectorAll('[data-w]')) {
    const r = document.createRange(); r.selectNodeContents(el);
    el.style.letterSpacing = '0px';
    let ls = 0;
    for (let i = 0; i < 4; i++) {
      ls += (Number(el.dataset.w) - r.getBoundingClientRect().width) / el.textContent.length;
      el.style.letterSpacing = ls.toFixed(3) + 'px';
    }
  }
}
fitLabels();
addEventListener('load', () => { fitLabels(); requestAnimationFrame(fitLabels); });
document.fonts.ready.then(fitLabels);
</script>
</body>
</html>
